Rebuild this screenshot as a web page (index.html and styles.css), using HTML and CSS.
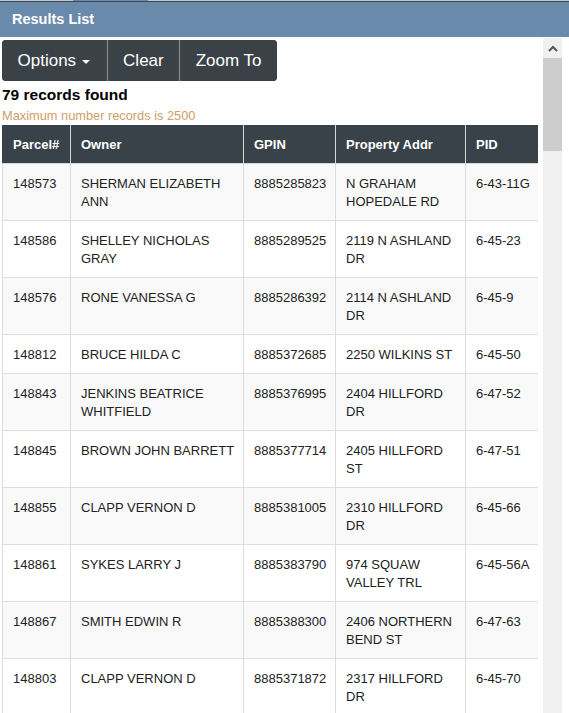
FILE: index.html
```html
<!DOCTYPE html>
<html>
<head>
<meta charset="utf-8">
<link rel="stylesheet" href="styles.css">
</head>
<body>
<div class="topline"><span class="topline-tab"></span></div>
<div class="titlebar">Results List</div>
<div class="panel">
  <div class="content">
    <div class="btn-group">
      <button class="btn btn-options">Options <span class="caret"></span></button>
      <button class="btn">Clear</button>
      <button class="btn">Zoom To</button>
    </div>
    <div class="records">79 records found</div>
    <div class="maxnote">Maximum number records is 2500</div>
    <table class="results">
      <colgroup>
        <col class="c-parcel">
        <col class="c-owner">
        <col class="c-gpin">
        <col class="c-addr">
        <col class="c-pid">
      </colgroup>
      <thead>
        <tr><th>Parcel#</th><th>Owner</th><th>GPIN</th><th>Property Addr</th><th>PID</th></tr>
      </thead>
      <tbody>
        <tr><td>148573</td><td>SHERMAN ELIZABETH ANN</td><td>8885285823</td><td>N GRAHAM HOPEDALE RD</td><td class="pid">6-43-11G</td></tr>
        <tr><td>148586</td><td>SHELLEY NICHOLAS GRAY</td><td>8885289525</td><td>2119 N ASHLAND DR</td><td class="pid">6-45-23</td></tr>
        <tr><td>148576</td><td>RONE VANESSA G</td><td>8885286392</td><td>2114 N ASHLAND DR</td><td class="pid">6-45-9</td></tr>
        <tr><td>148812</td><td>BRUCE HILDA C</td><td>8885372685</td><td>2250 WILKINS ST</td><td class="pid">6-45-50</td></tr>
        <tr><td>148843</td><td>JENKINS BEATRICE WHITFIELD</td><td>8885376995</td><td>2404 HILLFORD DR</td><td class="pid">6-47-52</td></tr>
        <tr><td>148845</td><td>BROWN JOHN BARRETT</td><td>8885377714</td><td>2405 HILLFORD ST</td><td class="pid">6-47-51</td></tr>
        <tr><td>148855</td><td>CLAPP VERNON D</td><td>8885381005</td><td>2310 HILLFORD DR</td><td class="pid">6-45-66</td></tr>
        <tr><td>148861</td><td>SYKES LARRY J</td><td>8885383790</td><td>974 SQUAW VALLEY TRL</td><td class="pid">6-45-56A</td></tr>
        <tr><td>148867</td><td>SMITH EDWIN R</td><td>8885388300</td><td>2406 NORTHERN BEND ST</td><td class="pid">6-47-63</td></tr>
        <tr><td>148803</td><td>CLAPP VERNON D</td><td>8885371872</td><td>2317 HILLFORD DR</td><td class="pid">6-45-70</td></tr>
      </tbody>
    </table>
  </div>
  <div class="scrollbar">
    <div class="sb-btn">
      <svg width="10" height="7" viewBox="0 0 10 7"><path d="M1 6 L5 2 L9 6" fill="none" stroke="#555" stroke-width="2"/></svg>
    </div>
    <div class="sb-thumb"></div>
    <div class="sb-track"></div>
    <div class="sb-btn">
      <svg width="10" height="7" viewBox="0 0 10 7"><path d="M1 1 L5 5 L9 1" fill="none" stroke="#555" stroke-width="2"/></svg>
    </div>
  </div>
</div>
</body>
</html>
```
FILE: styles.css
```css
* { box-sizing: border-box; }
html, body {
  margin: 0;
  padding: 0;
  height: 713px;
  overflow: hidden;
  background: #ffffff;
  font-family: "Liberation Sans", Arial, sans-serif;
}
.topline {
  height: 1px;
  background: #c3c7cb;
  display: flex;
}
.topline-tab {
  margin-left: 73px;
  width: 75px;
  height: 1px;
  background: #6a8aab;
}
.titlebar {
  border-top: 1px solid #3c4854;
  height: 36px;
  line-height: 35px;
  background: #6a8aab;
  color: #ffffff;
  font-weight: bold;
  font-size: 14.5px;
  padding-left: 12px;
}
.panel {
  display: flex;
  height: 690px;
  overflow: hidden;
}
.content {
  flex: 1;
  padding: 3px 0 0 2px;
  overflow: hidden;
}
.btn-group {
  display: inline-flex;
  background: #3a4248;
  border-radius: 4px;
  overflow: hidden;
  height: 41px;
}
.btn {
  font-family: "Liberation Sans", Arial, sans-serif;
  font-size: 17px;
  color: #ffffff;
  background: #3a4248;
  border: none;
  border-left: 1px solid #8c939a;
  padding: 0 15.5px;
  height: 41px;
  line-height: 41px;
  display: flex;
  align-items: center;
}
.btn-options { border-left: none; padding: 0 16.5px 0 15.5px; }
.caret {
  display: inline-block;
  width: 0;
  height: 0;
  border-top: 4px solid #ffffff;
  border-left: 4.5px solid transparent;
  border-right: 4.5px solid transparent;
  margin-left: 6px;
  margin-top: 2px;
}
.records {
  margin-top: 4px;
  font-size: 15.5px;
  font-weight: bold;
  line-height: 20px;
  color: #000000;
}
.maxnote {
  margin-top: 2px;
  font-size: 12.8px;
  line-height: 17px;
  color: #d09d66;
}
.results {
  margin-top: 1px;
  border-collapse: collapse;
  table-layout: fixed;
  width: 537px;
  font-size: 13px;
  color: #222222;
}
.c-parcel { width: 68px; }
.c-owner { width: 173px; }
.c-gpin { width: 92px; }
.c-addr { width: 130px; }
.c-pid { width: 74px; }
.results th {
  background: #394248;
  color: #ffffff;
  font-weight: bold;
  text-align: left;
  padding: 10px 8px 9px 10px;
  line-height: 19px;
  border-left: 1px solid #d6d8da;
  border-bottom: 1px solid #d6d8da;
}
.results th:first-child { border-left: 1px solid #394248; }
.results td {
  padding: 11px 8px 9px 10px;
  line-height: 18px;
  vertical-align: top;
  border: 1px solid #dddddd;
}
.results td.pid { white-space: nowrap; }
.results tbody tr:nth-child(odd) td { background: #f9f9f9; }
.results tbody tr:nth-child(even) td { background: #ffffff; }
.scrollbar {
  width: 19px;
  margin: 1px 7px 0 5px;
  display: flex;
  flex-direction: column;
  background: #f0f0f0;
}
.sb-btn {
  height: 20px;
  display: flex;
  align-items: center;
  justify-content: center;
  flex: none;
}
.sb-thumb {
  height: 93px;
  background: #cdcdcd;
  flex: none;
}
.sb-track { flex: 1; }
```
